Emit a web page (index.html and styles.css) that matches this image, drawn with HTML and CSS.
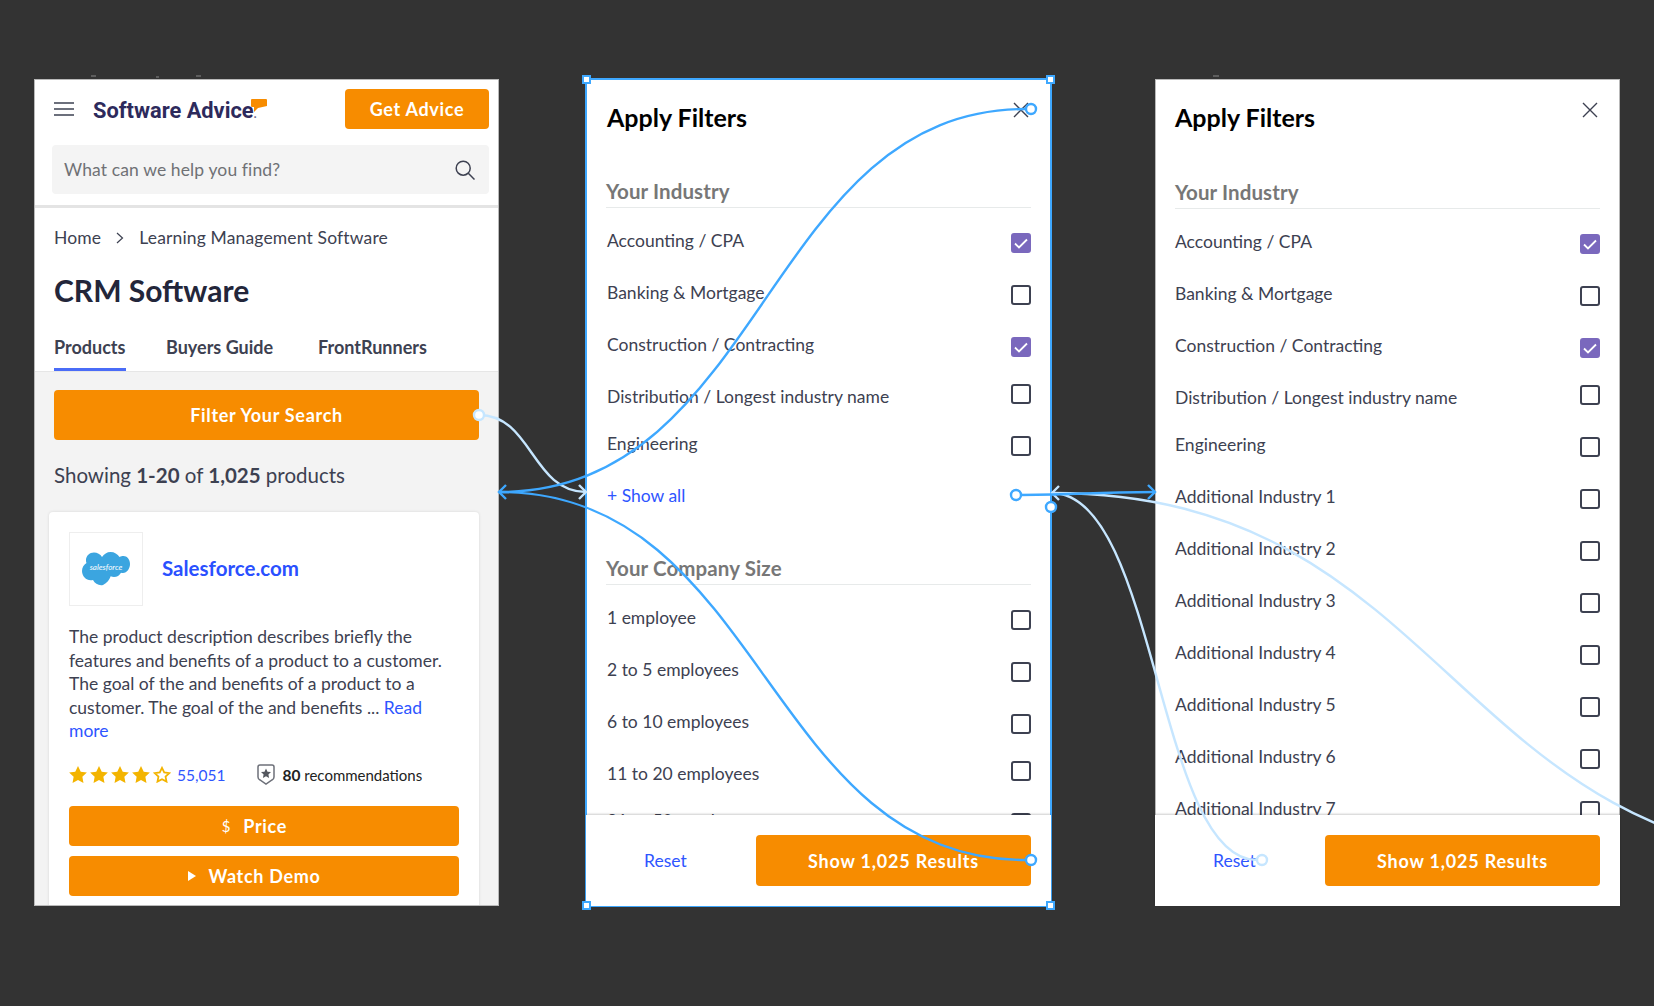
FILE: index.html
```
<!DOCTYPE html>
<html lang="en">
<head>
<meta charset="utf-8">
<title>Apply Filters prototype</title>
<link rel="stylesheet" href="styles.css">
</head>
<body>
<main class="board">

<section class="frame frame-product">
  <header class="top">
    <svg class="burger" width="20" height="14" viewBox="0 0 20 14"><path d="M0 1h20M0 7h20M0 13h20" stroke="#3d4151" stroke-width="1.5" fill="none"/></svg>
    <div class="logo"><span class="logo-word">Software Advice<span class="logo-dot">.</span></span>
      <svg class="logo-bubble" width="16" height="13" viewBox="0 0 16 13"><path d="M1 0h14a1 1 0 0 1 1 1v6l-9 2-4 4v-5H1a1 1 0 0 1-1-1V1a1 1 0 0 1 1-1z" fill="#f78c00"/></svg>
    </div>
    <a class="btn btn-advice">Get Advice</a>
  </header>
  <div class="search">
    <span>What can we help you find?</span>
    <svg width="20" height="20" viewBox="0 0 20 20"><circle cx="8.2" cy="8.2" r="7" fill="none" stroke="#3d4151" stroke-width="1.5"/><path d="M13.3 13.3L19.5 19.5" stroke="#3d4151" stroke-width="1.5"/></svg>
  </div>
  <nav class="crumbs"><span>Home</span>
    <svg width="8" height="12" viewBox="0 0 8 12"><path d="M1 1l5.5 5L1 11" fill="none" stroke="#3d4151" stroke-width="1.2"/></svg>
    <span>Learning Management Software</span></nav>
  <h1 class="page-title">CRM Software</h1>
  <div class="tabs">
    <a class="tab tab-active">Products</a>
    <a class="tab tab-buyers">Buyers Guide</a>
    <a class="tab tab-runners">FrontRunners</a>
  </div>
  <div class="results">
    <a class="btn btn-filter">Filter Your Search</a>
    <p class="showing">Showing <b>1-20</b> of <b>1,025</b> products</p>
    <article class="card">
      <div class="card-head">
        <div class="vendor-logo">
          <svg width="48" height="34" viewBox="0 0 48 34">
            <path d="M20 5c2-3 5-5 8.500-5 4 0 7 2 9 5 1.500-.6 2.500-1 4-1 3.500 0 6.500 3.500 6.500 8s-3 9-7 9c-.7 0-1.500 0-2-.3-1.500 2.800-4 4.300-7 4.300-1.200 0-2.300-.3-3.300-.8C27.500 27.500 25 31 21 33c-4 .8-8-1-10-5-1 .3-1.500.3-2.300.3C4 28.300 0 24 0 19c0-3.500 1.800-6.500 4.500-8C4 9.800 4 9 4 8c0-4 3.500-7.500 8-7.500 3.300 0 6.300 1.700 8 4.500z" fill="#3ba5e0"/>
            <text class="sf-text" x="24" y="18" text-anchor="middle">salesforce</text>
          </svg>
        </div>
        <a class="vendor-name">Salesforce.com</a>
      </div>
      <p class="desc">The product description describes briefly the features and benefits of a product to a customer. The goal of the and benefits of a product to a customer. The goal of the and benefits ... <a class="link">Read more</a></p>
      <div class="meta">
        <div class="stars">
          <svg width="18" height="17" viewBox="0 0 24 23"><path class="star" d="M12 0l3.700 7.700 8.300 1.100-6.100 5.800 1.500 8.400L12 19l-7.400 4 1.500-8.400L0 8.800l8.300-1.100z"/></svg>
          <svg width="18" height="17" viewBox="0 0 24 23"><path class="star" d="M12 0l3.700 7.700 8.300 1.100-6.100 5.800 1.500 8.400L12 19l-7.400 4 1.500-8.400L0 8.800l8.300-1.100z"/></svg>
          <svg width="18" height="17" viewBox="0 0 24 23"><path class="star" d="M12 0l3.700 7.700 8.300 1.100-6.100 5.800 1.500 8.400L12 19l-7.400 4 1.500-8.400L0 8.800l8.300-1.100z"/></svg>
          <svg width="18" height="17" viewBox="0 0 24 23"><path class="star" d="M12 0l3.700 7.700 8.300 1.100-6.100 5.800 1.500 8.400L12 19l-7.400 4 1.500-8.400L0 8.800l8.300-1.100z"/></svg>
          <svg width="18" height="17" viewBox="0 0 24 23"><path class="star-empty" d="M12 2.500l3 6.200 6.800.9-5 4.700 1.300 6.800-6.100-3.300-6.100 3.300 1.300-6.800-5-4.700 6.800-.9z"/></svg>
        </div>
        <a class="review-count">55,051</a>
        <svg class="badge" width="18" height="21" viewBox="0 0 18 21"><path d="M3 1h12a2 2 0 0 1 2 2v10c0 1.500-.8 2.500-2 3l-6 4-6-4c-1.200-.5-2-1.500-2-3V3a2 2 0 0 1 2-2z" fill="#fff" stroke="#6d7079" stroke-width="1.500"/><path d="M9 4.500l1.500 3.200 3.500.4-2.600 2.400.7 3.500L9 12.300 5.900 14l.7-3.500L4 8.100l3.500-.4z" fill="#55585f"/></svg>
        <span class="recs"><b>80</b> recommendations</span>
      </div>
      <a class="btn btn-card"><span class="btn-dollar">$</span>Price</a>
      <a class="btn btn-card btn-demo"><svg width="8" height="10" viewBox="0 0 8 10"><path d="M0 0l8 5-8 5z" fill="#fff"/></svg>Watch Demo</a>
    </article>
  </div>
</section>

<section class="frame frame-sheet frame-filters">
  <header class="sheet-top">
    <h2 class="sheet-title">Apply Filters</h2>
    <svg width="16" height="16" viewBox="0 0 16 16"><path d="M1 1l14 14M15 1L1 15" stroke="#3d4151" stroke-width="1.400"/></svg>
  </header>
  <div class="sheet-body">
    <h3 class="group">Your Industry</h3>
    <ul class="rows">
      <li class="row">Accounting / CPA<i class="box box-on"><svg width="14" height="11" viewBox="0 0 14 11"><path d="M1 5.500l4 4 8-8" fill="none" stroke="#fff" stroke-width="1.800"/></svg></i></li>
      <li class="row">Banking &amp; Mortgage<i class="box"></i></li>
      <li class="row">Construction / Contracting<i class="box box-on"><svg width="14" height="11" viewBox="0 0 14 11"><path d="M1 5.500l4 4 8-8" fill="none" stroke="#fff" stroke-width="1.800"/></svg></i></li>
      <li class="row row-short">Distribution / Longest industry name<i class="box"></i></li>
      <li class="row">Engineering<i class="box"></i></li>
      <li class="row row-link"><a class="link">+ Show all</a></li>
    </ul>
    <h3 class="group group-next">Your Company Size</h3>
    <ul class="rows">
      <li class="row">1 employee<i class="box"></i></li>
      <li class="row">2 to 5 employees<i class="box"></i></li>
      <li class="row">6 to 10 employees<i class="box"></i></li>
      <li class="row row-short">11 to 20 employees<i class="box"></i></li>
      <li class="row row-clip">21 to 50 employees<i class="box"></i></li>
    </ul>
  </div>
  <footer class="sheet-foot">
    <a class="link reset">Reset</a>
    <a class="btn btn-show">Show 1,025 Results</a>
  </footer>
  <i class="handle handle-tl"></i><i class="handle handle-tr"></i><i class="handle handle-bl"></i><i class="handle handle-br"></i>
</section>

<section class="frame frame-sheet frame-more">
  <header class="sheet-top">
    <h2 class="sheet-title">Apply Filters</h2>
    <svg width="16" height="16" viewBox="0 0 16 16"><path d="M1 1l14 14M15 1L1 15" stroke="#3d4151" stroke-width="1.400"/></svg>
  </header>
  <div class="sheet-body">
    <h3 class="group">Your Industry</h3>
    <ul class="rows">
      <li class="row">Accounting / CPA<i class="box box-on"><svg width="14" height="11" viewBox="0 0 14 11"><path d="M1 5.500l4 4 8-8" fill="none" stroke="#fff" stroke-width="1.800"/></svg></i></li>
      <li class="row">Banking &amp; Mortgage<i class="box"></i></li>
      <li class="row">Construction / Contracting<i class="box box-on"><svg width="14" height="11" viewBox="0 0 14 11"><path d="M1 5.500l4 4 8-8" fill="none" stroke="#fff" stroke-width="1.800"/></svg></i></li>
      <li class="row row-short">Distribution / Longest industry name<i class="box"></i></li>
      <li class="row">Engineering<i class="box"></i></li>
      <li class="row">Additional Industry 1<i class="box"></i></li>
      <li class="row">Additional Industry 2<i class="box"></i></li>
      <li class="row">Additional Industry 3<i class="box"></i></li>
      <li class="row">Additional Industry 4<i class="box"></i></li>
      <li class="row">Additional Industry 5<i class="box"></i></li>
      <li class="row">Additional Industry 6<i class="box"></i></li>
      <li class="row">Additional Industry 7<i class="box"></i></li>
    </ul>
  </div>
  <footer class="sheet-foot">
    <a class="link reset">Reset</a>
    <a class="btn btn-show">Show 1,025 Results</a>
  </footer>
</section>

</main>

<svg class="wires" width="1654" height="1006" viewBox="0 0 1654 1006" fill="none">
  <g class="wire-pale">
    <path d="M479 415C532 415 532 492 586 492"/>
    <path d="M579 485L586 492L579 499"/>
    <path d="M1052 493C1157 493 1157 860 1257 860"/>
    <path d="M1052 493C1451 493 1451 860 1850 860"/>
    <path d="M1059 486L1052 493L1059 500"/>
    <circle class="dot" cx="479" cy="415" r="5"/>
    <circle class="dot-open" cx="1262" cy="860" r="5"/>
  </g>
  <g class="wire">
    <path d="M499 492C765 492 765 109 1026 109"/>
    <path d="M499 492C765 492 765 860 1026 860"/>
    <path d="M1021 495C1085 495 1085 492 1155 492"/>
    <path d="M506 485L499 492L506 499"/>
    <path d="M1148 485L1155 492L1148 499"/>
    <circle class="dot-open" cx="1031" cy="109" r="5"/>
    <circle class="dot" cx="1031" cy="860" r="5"/>
    <circle class="dot" cx="1016" cy="495" r="5"/>
    <circle class="dot" cx="1051" cy="507" r="5"/>
  </g>
  <path class="speck" d="M91 76h5M156 77h3M196 76h5M1213 76h6"/>
</svg>
</body>
</html>
```
FILE: styles.css
```
* { box-sizing: border-box; }
html, body { margin: 0; padding: 0; }
body {
  width: 1654px;
  height: 1006px;
  overflow: hidden;
  position: relative;
  background: #333;
  font-family: "Lato", "Noto Sans", sans-serif;
  font-size: 17.500px;
  color: #3d4151;
}
a { text-decoration: none; }
ul { list-style: none; margin: 0; padding: 0; }
h1, h2, h3, p { margin: 0; }

.board { display: flex; align-items: flex-start; padding: 79px 0 0 34px; }
.frame { position: relative; width: 465px; height: 827px; background: #fff; outline: 1px solid #b9b9b9; outline-offset: -1px; }
.frame-filters { margin-left: 87px; outline: 2px solid #3ea8ff; outline-offset: -1px; }
.frame-more { margin-left: 104px; }
.frame-product { overflow: hidden; }

.btn { display: flex; align-items: center; justify-content: center; background: #f78c00; color: #fff; font-weight: 700; border-radius: 4px; letter-spacing: .7px; }

.top { display: flex; align-items: center; height: 40px; margin-top: 10px; padding: 0 10px 0 20px; }
.burger { flex: none; }
.logo { position: relative; margin: 5px 0 0 19px; font-family: "Roboto", "Liberation Sans", sans-serif; font-weight: 700; font-size: 22.500px; line-height: 26px; color: #2d2a5c; white-space: nowrap; }
.logo-word { display: inline-block; transform: scaleX(.97); transform-origin: left center; }
.logo-dot { color: #6d6c8c; font-size: 12px; }
.logo-bubble { position: absolute; left: 158px; top: 2px; }
.btn-advice { width: 144px; height: 40px; margin-left: auto; font-size: 18px; }

.search { display: flex; align-items: center; justify-content: space-between; height: 49px; margin: 16px 10px 0 18px; padding: 0 14px 0 12px; background: #f4f4f4; border-radius: 4px; color: #6f7175; letter-spacing: .12px; }

.crumbs { display: flex; align-items: center; margin-top: 11px; padding: 16px 0 0 20px; border-top: 3px solid #e4e4e4; line-height: 24px; height: 46px; letter-spacing: .15px; }
.crumbs svg { margin: 0 15px; }
.page-title { padding-left: 20px; margin-top: 20px; font-size: 30px; line-height: 38px; font-weight: 700; color: #23263a; }
.tabs { display: flex; margin-top: 26px; padding-left: 20px; height: 36px; font-weight: 700; font-size: 18px; line-height: 24px; color: #3d4151; }
.tab { height: 36px; }
.tab-active { width: 72px; border-bottom: 3px solid #4a6cf7; }
.tab-buyers { width: 152px; margin-left: 40px; }
.tab-runners { width: 110px; }

.results { height: 536px; overflow: hidden; padding: 18px 20px 0; background: #f3f3f3; border-top: 1px solid #e6e6e6; }
.btn-filter { width: 425px; height: 50px; font-size: 18px; }
.showing { margin-top: 21px; line-height: 28px; font-size: 20.500px; color: #3d4151; }
.showing b { font-weight: 700; }
.card { width: 430px; height: 400px; margin: 23px 0 0 -5px; padding: 20px; background: #fff; border-radius: 4px; box-shadow: 0 0 3px rgba(0,0,0,.12); }
.card-head { display: flex; align-items: center; }
.vendor-logo { display: flex; align-items: center; justify-content: center; flex: none; width: 74px; height: 74px; border: 1px solid #eee; }
.sf-text { font-size: 8px; font-style: italic; fill: #fff; }
.vendor-name { margin: -2px 0 0 19px; font-size: 20.500px; font-weight: 700; color: #2a50ff; }
.desc { margin-top: 19px; line-height: 23.600px; width: 385px; }
.link { color: #2e55ff; }
.meta { display: flex; align-items: center; margin-top: 20px; height: 24px; }
.stars { display: flex; gap: 3px; flex: none; }
.star { fill: #f3b400; }
.star-empty { fill: none; stroke: #f3b400; stroke-width: 2.400; }
.review-count { margin-left: 6px; font-size: 15.500px; color: #2e55ff; }
.badge { margin-left: 32px; }
.recs { margin-left: 7px; font-size: 15px; color: #222; }
.recs b { font-size: 15.500px; }
.btn-card { width: 390px; height: 40px; margin-top: 19px; padding-right: 19px; font-size: 18px; }
.btn-demo { margin-top: 10px; }
.btn-demo svg { margin-right: 12px; }
.btn-dollar { margin-right: 12px; font-weight: 400; font-size: 15px; }

.frame-sheet { display: flex; flex-direction: column; }
.sheet-top { display: flex; align-items: flex-start; justify-content: space-between; flex: none; height: 99px; padding: 21px 22px 0 21px; }
.frame-more .sheet-top { padding-left: 20px; }
.sheet-top svg { margin-top: 2px; }
.sheet-title { font-size: 25px; line-height: 34px; font-weight: 700; color: #000; }
.sheet-body { flex: 1; min-height: 0; overflow: hidden; padding: 0 20px 0 20px; }
.frame-more .sheet-body { padding-top: 1px; }
.frame-more .row { padding-left: 0; }
.group { font-size: 20.500px; letter-spacing: .1px; font-weight: 700; line-height: 26px; color: #777; padding-bottom: 3px; border-bottom: 1px solid #e7eaea; }
.group-next { margin-top: 19px; }
.rows { margin-top: 21px; }
.row { display: flex; justify-content: space-between; align-items: flex-start; height: 52px; line-height: 24px; padding-left: 1px; }
.row-short { height: 47px; }
.row-short .box { margin-top: -1px; }
.box { display: flex; align-items: center; justify-content: center; flex: none; width: 20px; height: 20px; margin-top: 4px; border: 2px solid #3d4151; border-radius: 3px; }
.box-on { background: #7a68bd; border-color: #7a68bd; }
.sheet-foot { display: flex; align-items: center; flex: none; position: relative; height: 91px; padding: 0 20px 0 58px; background: #fff; box-shadow: 0 -1px 2px rgba(0,0,0,.2); }
.btn-show { width: 275px; height: 51px; margin-left: auto; font-size: 18px; letter-spacing: .8px; }

.handle { position: absolute; width: 9px; height: 9px; background: #fff; border: 2px solid #3ea8ff; }
.handle-tl { left: -4px; top: -4px; }
.handle-tr { right: -4px; top: -4px; }
.handle-bl { left: -4px; bottom: -4px; }
.handle-br { right: -4px; bottom: -4px; }

.wires { position: absolute; left: 0; top: 0; pointer-events: none; }
.wire path { stroke: #3ea8ff; stroke-width: 2.400; }
.wire-pale path { stroke: #c6e6ff; stroke-width: 2.400; }
.wire .dot, .wire .dot-open { stroke: #3ea8ff; stroke-width: 2.400; fill: #fff; }
.wire-pale .dot, .wire-pale .dot-open { stroke: #c6e6ff; stroke-width: 2.400; fill: #fff; }
.wire-pale .dot-open, .wire .dot-open { fill: none; }
.speck { stroke: #888; stroke-width: 1; }
```
